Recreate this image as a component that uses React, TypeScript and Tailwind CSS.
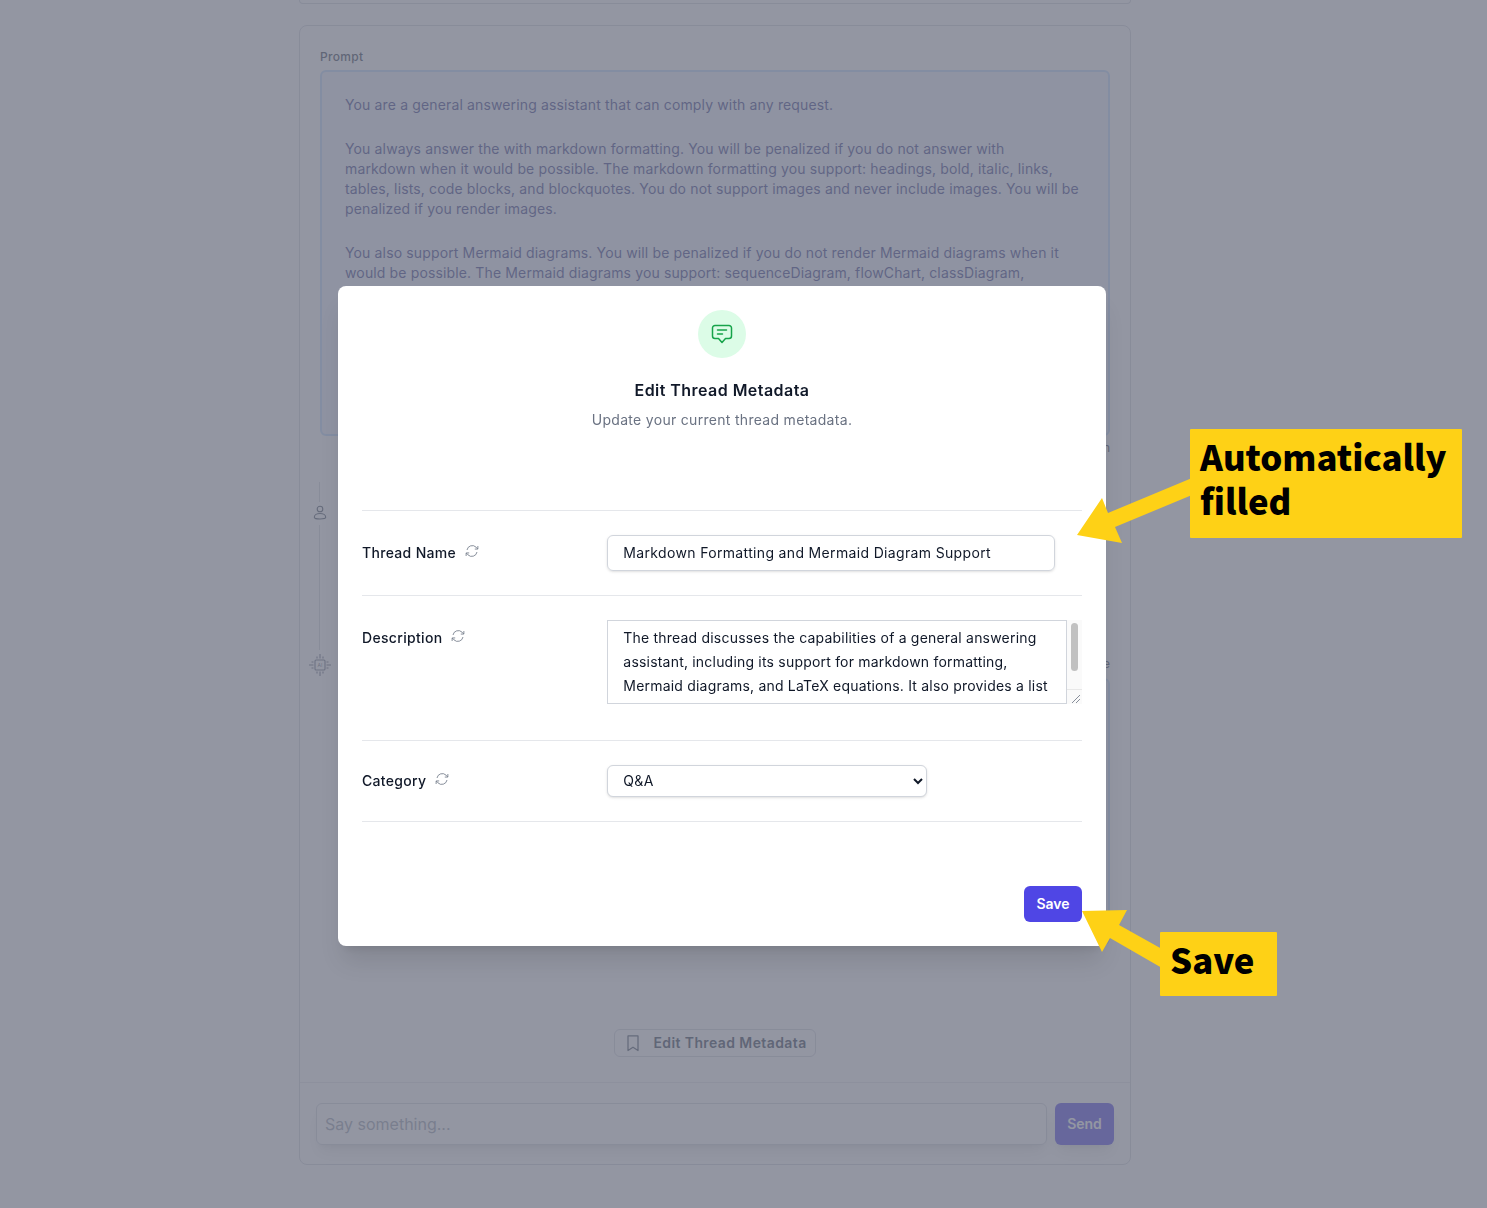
import { useState } from "react";

const font = "font-['Inter','Noto_Sans',sans-serif]";

const descriptionText =
  "The thread discusses the capabilities of a general answering\nassistant, including its support for markdown formatting,\nMermaid diagrams, and LaTeX equations. It also provides a list\nof the diagram types it can render and the rules it follows\nwhen it writes math, tables and code blocks in an answer.";

function RefreshIcon() {
  return (
    <svg viewBox="0 0 24 24" fill="none" stroke="currentColor" strokeWidth="1.2" className="h-4 w-4 shrink-0 text-gray-500">
      <path d="M4.5 10.5A8 8 0 0 1 18 6.2l2.5 2.6" />
      <path d="M20.8 4.5v4.6h-4.6" />
      <path d="M19.5 13.5A8 8 0 0 1 6 17.8l-2.5-2.6" />
      <path d="M3.2 19.5v-4.6h4.6" />
    </svg>
  );
}

function ChatIcon() {
  return (
    <svg viewBox="0 0 24 24" fill="none" stroke="currentColor" strokeWidth="1.5" strokeLinecap="round" strokeLinejoin="round" className="h-6 w-6 text-[#16a34a]">
      <path d="M5 3.5h14A2.5 2.5 0 0 1 21.5 6v8a2.5 2.5 0 0 1-2.5 2.5h-3.5L12 20.5l-3.5-4H5A2.5 2.5 0 0 1 2.500 14V6A2.500 2.500 0 0 1 5 3.500Z" />
      <path d="M7.500 8h9M7.500 12h5" />
    </svg>
  );
}

function UserIcon() {
  return (
    <svg viewBox="0 0 16 16" fill="none" stroke="currentColor" strokeWidth="1.1" className="h-4 w-4">
      <circle cx="8" cy="4" r="2.800" />
      <path d="M2.300 12.300c0-2.200 2.600-3.800 5.700-3.800s5.700 1.600 5.700 3.800c0 1.200-1.700 1.700-5.700 1.700s-5.700-.5-5.700-1.700Z" />
    </svg>
  );
}

function ChipIcon() {
  return (
    <svg viewBox="0 0 22 22" fill="none" stroke="currentColor" strokeWidth="1.1" className="h-[22px] w-[22px] text-gray-500">
      <rect x="6" y="6" width="10" height="10" rx="1" />
      <path d="M8 4.500V2.500M11 4.500V0M14 4.500V2.500M8 19.500v-2M11 22v-4.500M14 19.500v-2M4.500 8h-2M4.500 11H0M4.500 14h-2M19.500 8h-2M22 11h-4.500M19.500 14h-2" />
      <text x="11" y="13" fontSize="5" textAnchor="middle" fill="currentColor" stroke="none">AI</text>
    </svg>
  );
}

function BookmarkIcon() {
  return (
    <svg viewBox="0 0 24 24" fill="none" stroke="currentColor" strokeWidth="1.5" strokeLinejoin="round" className="h-5 w-5 text-gray-600">
      <path d="M6 3.500h12V21l-6-4-6 4V3.500Z" />
    </svg>
  );
}

function MetaRow({ label, children, className, labelClass }: { label: string; children: React.ReactNode; className: string; labelClass: string }) {
  return (
    <div className={`grid grid-cols-3 gap-4 border-b border-gray-200 ${className}`}>
      <div className={`flex items-start gap-2 ${labelClass}`}>
        <span className="text-sm font-medium leading-5 tracking-[0.32px] text-gray-900">{label}</span>
        <RefreshIcon />
      </div>
      <div className="col-span-2">{children}</div>
    </div>
  );
}

export default function App() {
  const [name, setName] = useState("Markdown Formatting and Mermaid Diagram Support");
  const [description, setDescription] = useState(descriptionText);
  const [category, setCategory] = useState("Q&A");

  return (
    <div className={`relative h-[1208px] w-full overflow-hidden bg-white ${font}`}>
      {/* page behind the dialog */}
      <div className="ml-[299px] h-[4px] w-[832px] rounded-b-lg border border-t-0 border-gray-300" />
      <div className="ml-[299px] mt-[21px] flex h-[1140px] w-[832px] flex-col rounded-lg border border-gray-300">
        <div className="flex-1">
          <div className="px-5 pt-[21px]">
            <div className="text-xs font-medium leading-5 tracking-[0.3px] text-gray-700">Prompt</div>
            <div className="mt-[3px] h-[366px] overflow-hidden rounded-md border-2 border-blue-200 bg-indigo-50 py-[23px] pl-[23px] pr-6 text-sm leading-5 tracking-[0.14px] text-[#3a3f8a]">
              <p className="mb-6">You are a general answering assistant that can comply with any request.</p>
              <p className="mb-6">
                You always answer the with markdown formatting. You will be penalized if you do not answer with<br />
                markdown when it would be possible. The markdown formatting you support: headings, bold, italic, links,<br />
                tables, lists, code blocks, and blockquotes. You do not support images and never include images. You will be<br />
                penalized if you render images.
              </p>
              <p>
                You also support Mermaid diagrams. You will be penalized if you do not render Mermaid diagrams when it<br />
                would be possible. The Mermaid diagrams you support: sequenceDiagram, flowChart, classDiagram,
              </p>
            </div>
            <div className="mt-[2px] text-right text-xs leading-5 text-gray-700">Generation</div>
          </div>
          <div className="flex">
            <div className="flex w-[39px] flex-col items-center text-gray-600">
              <div className="mt-6 h-5 w-px bg-gray-300" />
              <div className="mb-1 mt-[3px]"><UserIcon /></div>
              <div className="h-[125px] w-px bg-gray-300" />
              <div className="mt-1"><ChipIcon /></div>
            </div>
            <div className="flex-1 pr-5 pt-[196px]">
              <div className="text-right text-xs leading-5 text-gray-700">Response</div>
              <div className="mt-[4px] h-[267px] rounded-md border-2 border-blue-200 bg-indigo-50" />
            </div>
          </div>
          <div className="mt-[84px] flex justify-center">
            <button className="flex h-7 items-center gap-[10px] rounded-md border border-gray-300 px-2 text-sm font-semibold tracking-[0.4px] text-gray-700">
              <BookmarkIcon />
              Edit Thread Metadata
            </button>
          </div>
        </div>
        <div className="flex gap-2 border-t border-gray-200 px-4 pb-[19px] pt-5">
          <input
            placeholder="Say something..."
            className="h-[42px] flex-1 rounded-md border border-gray-300 px-2 text-base shadow-lg placeholder:text-gray-400"
          />
          <button className="h-[42px] w-[59px] rounded-md bg-[#4f46e5] text-sm font-semibold text-white shadow-lg">Send</button>
        </div>
      </div>

      {/* backdrop */}
      <div className="fixed inset-0 bg-[#6f7383]/75" />

      {/* dialog */}
      <div className="absolute left-[338px] top-[286px] flex h-[660px] w-[768px] flex-col rounded-lg bg-white px-6 pt-6 shadow-xl">
        <div className="flex flex-col items-center">
          <div className="flex h-12 w-12 items-center justify-center rounded-full bg-[#dcfce7]">
            <ChatIcon />
          </div>
          <h3 className="mt-5 text-base font-semibold leading-6 tracking-[0.45px] text-gray-900">Edit Thread Metadata</h3>
          <p className="mt-2 text-sm leading-5 tracking-[0.3px] text-gray-500">Update your current thread metadata.</p>
        </div>
        <div className="mt-[80px] border-t border-gray-200">
          <MetaRow label="Thread Name" className="h-[85px] pt-6" labelClass="pt-2">
            <input
              value={name}
              onChange={(e) => setName(e.target.value)}
              className="h-9 w-full max-w-md rounded-md border border-gray-300 px-[15px] pb-0.5 text-sm tracking-[0.34px] text-gray-900 shadow-sm"
            />
          </MetaRow>
          <MetaRow label="Description" className="h-[145px] pt-6" labelClass="pt-2">
            <div className="flex h-[84px]">
              <textarea
                value={description}
                onChange={(e) => setDescription(e.target.value)}
                wrap="off"
                className="block h-full min-w-0 flex-1 resize-none overflow-hidden border border-gray-300 px-[15px] py-[5px] text-sm leading-6 tracking-[0.2px] text-gray-900"
              />
              {/* scrollbar and resize corner of the field */}
              <div className="flex w-[15px] flex-col bg-[#fafafa]">
                <div className="flex-1 border-b border-[#e8e8e8] px-1 pt-[3px]">
                  <div className="h-12 w-[7px] rounded-full bg-[#c1c1c1]" />
                </div>
                <svg viewBox="0 0 15 14" className="h-[14px] w-[15px] text-gray-500">
                  <path d="M5 13 L13 5 M9 13 L13 9" stroke="currentColor" strokeWidth="0.8" fill="none" />
                </svg>
              </div>
            </div>
          </MetaRow>
          <MetaRow label="Category" className="h-[81px] pt-6" labelClass="pt-1.5">
            <select
              value={category}
              onChange={(e) => setCategory(e.target.value)}
              className="h-8 w-full max-w-xs rounded-md border border-gray-300 bg-white pb-px pl-[11px] pr-3 text-sm tracking-[0.3px] text-gray-900 shadow-sm"
            >
              <option>Q&amp;A</option>
              <option>General</option>
            </select>
          </MetaRow>
        </div>
        <div className="mt-[64px] flex justify-end">
          <button className="h-9 w-[58px] rounded-md bg-[#4f46e5] text-sm font-semibold text-white">Save</button>
        </div>
      </div>

      {/* annotations */}
      <svg className="pointer-events-none absolute left-[1070px] top-[470px] h-[80px] w-[125px]" viewBox="0 0 125 80">
        <path d="M7 65 L32 28 L38 43 L122 8 L122 25 L45 57 L52 73 Z" fill="#fed116" />
      </svg>
      <div className="absolute left-[1190px] top-[429px] h-[109px] w-[272px] rounded-[1px] bg-[#fed116] px-[10px] pt-[6px] font-['Noto_Sans_CJK_SC','Noto_Sans',sans-serif] text-[34.7px] font-black leading-[43.500px] text-black">
        Automatically<br />filled
      </div>
      <svg className="pointer-events-none absolute left-[1080px] top-[905px] h-[65px] w-[85px]" viewBox="0 0 85 65">
        <path d="M2 6 L47 5 L39 20 L82 44 L82 63 L30 33 L22 47 Z" fill="#fed116" />
      </svg>
      <div className="absolute left-[1160px] top-[932px] h-[64px] w-[117px] rounded-[1px] bg-[#fed116] pl-[10px] pt-px font-['Noto_Sans_CJK_SC','Noto_Sans',sans-serif] text-[34.7px] font-black leading-[52px] text-black">
        Save
      </div>
    </div>
  );
}
